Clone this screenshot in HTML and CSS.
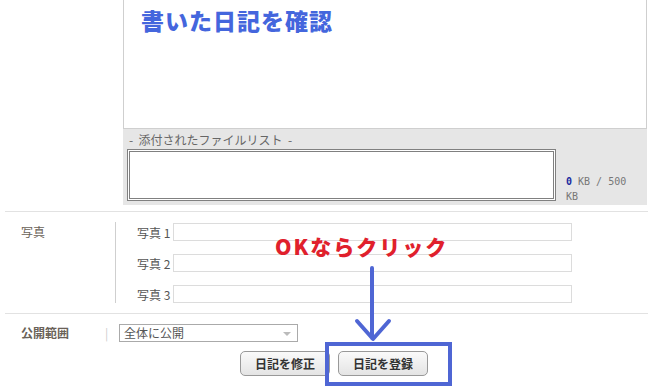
FILE: index.html
```html
<!DOCTYPE html>
<html lang="ja">
<head>
  <meta charset="UTF-8" />
  <title>日記の確認</title>
  <link rel="stylesheet" href="styles.css">
</head>
<body>

<div class="page">
  <div class="editor">
    <h1 class="title">書いた日記を確認</h1>
  </div>

  <div class="filelist">
    <div class="filelist-label">-&nbsp; 添付されたファイルリスト &nbsp;-</div>
    <div class="filelist-body">
      <div class="filebox"></div>
      <div class="filesize"><span class="used">0</span> KB / 500<br>KB</div>
    </div>
  </div>

  <div class="row photo-row">
    <div class="row-label">写真</div>
    <div class="photo-list">
      <div class="photo-item"><span>写真 1</span><input type="text" class="photo-input"></div>
      <div class="photo-item"><span>写真 2</span><input type="text" class="photo-input"></div>
      <div class="photo-item"><span>写真 3</span><input type="text" class="photo-input"></div>
    </div>
  </div>

  <div class="row public-row">
    <div class="row-label bold">公開範囲</div>
    <span class="sep">|</span>
    <div class="select">全体に公開<span class="select-arrow"></span></div>
  </div>

  <div class="buttons">
    <button type="button" class="btn">日記を修正</button>
    <button type="button" class="btn">日記を登録</button>
  </div>
</div>

<!-- 注釈 -->
<div class="note">OKならクリック</div>
<svg class="arrow" width="40" height="80" viewBox="0 0 40 80">
  <path d="M20 2 V72 M5 55 L21 73 L37 55" fill="none" stroke="#4f66d4" stroke-width="4" stroke-linecap="round" stroke-linejoin="round" />
</svg>
<div class="focus-box"></div>

</body>
</html>
```

FILE: styles.css
```css
body {
  margin: 0;
  padding: 0;
  background: #fff;
  font-family: "Noto Sans CJK JP", sans-serif;
  font-size: 12px;
  color: #555;
}
.page {
  width: 643px;
  margin-left: 5px;
}
.editor {
  margin-left: 118px;
  width: 524px;
  height: 129px;
  box-sizing: border-box;
  border: 1px solid #cfcfcf;
  border-top: none;
  padding: 3px 0 0 17px;
}
.title {
  margin: 0;
  font-size: 23px;
  line-height: 34px;
  font-weight: 900;
  color: #4466dd;
  letter-spacing: 1px;
}
.filelist {
  margin-left: 118px;
  width: 524px;
  height: 76px;
  box-sizing: border-box;
  background: #e6e6e6;
  padding: 4px;
}
.filelist-label {
  height: 14px;
  line-height: 14px;
  font-size: 12px;
  color: #666;
  padding-left: 2px;
}
.filelist-body {
  display: flex;
  align-items: flex-end;
  margin-top: 2px;
}
.filebox {
  width: 429px;
  height: 52px;
  box-sizing: border-box;
  background: #fff;
  border: 3px double #808080;
}
.filesize {
  width: 72px;
  margin-left: 10px;
  font-family: "DejaVu Sans Mono", monospace;
  font-size: 10px;
  line-height: 15px;
  color: #777;
  margin-bottom: -3px;
}
.used {
  color: #1a2aa0;
  font-weight: bold;
}
.row {
  display: flex;
  border-top: 1px solid #e2e2e2;
}
.row-label {
  width: 94px;
  padding-left: 16px;
  color: #6a6258;
  font-size: 12px;
}
.bold {
  font-weight: bold;
}
.photo-row {
  margin-top: 6px;
  height: 102px;
  box-sizing: border-box;
}
.photo-row .row-label {
  padding-top: 11px;
}
.photo-list {
  margin: 10px 0;
  padding: 1px 0 0 21px;
  border-left: 1px solid #cfcfcf;
  display: flex;
  flex-direction: column;
  gap: 13px;
}
.photo-item {
  display: flex;
  align-items: center;
  height: 18px;
}
.photo-item span {
  width: 36px;
  color: #555;
}
.photo-input {
  width: 399px;
  height: 18px;
  box-sizing: border-box;
  margin: 0;
  padding: 0;
  border: 1px solid #dcdcdc;
}
.public-row {
  height: 37px;
  align-items: center;
  box-sizing: border-box;
  padding-top: 1px;
}
.public-row .row-label {
  width: 84px;
}
.sep {
  color: #ccc;
  width: 14px;
}
.select {
  position: relative;
  width: 179px;
  height: 18px;
  box-sizing: border-box;
  border: 1px solid #aaa;
  padding-left: 4px;
  line-height: 16px;
  color: #555;
}
.select-arrow {
  position: absolute;
  right: 6px;
  top: 7px;
  border-left: 4px solid transparent;
  border-right: 4px solid transparent;
  border-top: 4px solid #bbb;
}
.buttons {
  display: flex;
  justify-content: center;
  gap: 8px;
  margin-left: -5px;
  width: 668px;
  padding-top: 1px;
}
.btn {
  width: 90px;
  height: 25px;
  border: 1px solid #999;
  border-radius: 5px;
  background: linear-gradient(#fafafa, #e4e4e4);
  font-family: "Noto Sans CJK JP", sans-serif;
  font-size: 12px;
  font-weight: bold;
  color: #333;
  padding: 0;
}
.note {
  position: absolute;
  left: 275px;
  top: 232px;
  font-size: 21px;
  line-height: 28px;
  font-weight: 900;
  color: #e0202c;
  letter-spacing: 2px;
}
.arrow {
  position: absolute;
  left: 352px;
  top: 266px;
}
.focus-box {
  position: absolute;
  left: 325px;
  top: 342px;
  width: 127px;
  height: 44px;
  box-sizing: border-box;
  border: 4px solid #4f66d4;
}
```
